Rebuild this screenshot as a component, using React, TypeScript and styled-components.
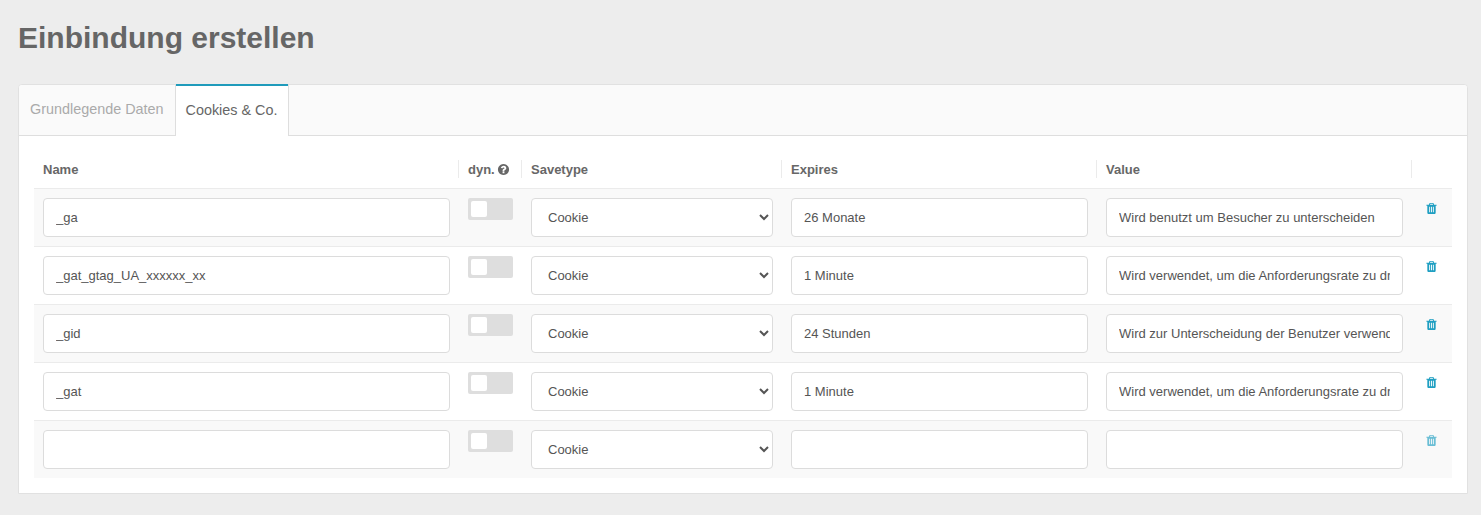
import React from 'react';
import styled, { createGlobalStyle } from 'styled-components';

const GlobalStyle = createGlobalStyle`
  *, *::before, *::after { box-sizing: border-box; }
  body {
    margin: 0;
    background: #ededed;
    color: #676767;
    font-family: "Liberation Sans", Arial, sans-serif;
    font-size: 13px;
  }
`;

const Page = styled.main`
  min-height: 515px;
  padding: 18px 13px 21px 18px;
`;

const Title = styled.h1`
  margin: 0 0 26px;
  font-size: 30px;
  line-height: 40px;
  font-weight: 700;
  color: #666;
`;

const Panel = styled.section`
  border: 1px solid #e1e1e1;
  border-radius: 4px 4px 0 0;
  background: #fff;
`;

const TabBar = styled.nav`
  display: flex;
  height: 51px;
  background: #fafafa;
  border-bottom: 1px solid #dedede;
  border-radius: 3px 3px 0 0;
`;

const Tab = styled.a<{ $active?: boolean }>`
  height: ${(p) => (p.$active ? 52 : 50)}px;
  margin-top: ${(p) => (p.$active ? -1 : 0)}px;
  padding: ${(p) => (p.$active ? '2px 9px 0 9.5px' : '0 12px 0 11px')};
  width: ${(p) => (p.$active ? 114 : 156)}px;
  font-size: 14.4px;
  line-height: ${(p) => (p.$active ? 49 : 48)}px;
  white-space: nowrap;
  color: ${(p) => (p.$active ? '#666' : '#aaa')};
  background: ${(p) => (p.$active ? '#fff' : 'transparent')};
  border: solid #dedede;
  border-width: ${(p) => (p.$active ? '0 1px' : '0')};
  box-shadow: ${(p) => (p.$active ? 'inset 0 2px #1f9bbb' : 'none')};
`;

const Grid = styled.div`
  padding: 14px 15px 15px;
`;

const Row = styled.div`
  display: grid;
  grid-template-columns: 425px 63px 260px 315px 315px 40px;
  height: 58px;
  border-top: 1px solid #ebebeb;

  &:nth-child(even) { background: #f9f9f9; }
`;

const HeaderRow = styled(Row)`
  height: 38px;
  border-top: 0;
  align-items: center;
`;

const HeaderCell = styled.div`
  display: flex;
  align-items: center;
  gap: 2px;
  height: 18px;
  padding: 0 8px 0 9px;
  font-weight: 700;
  color: #676767;
  border-right: 1px solid #ebebeb;

  &:last-child { border-right: 0; }
`;

const Cell = styled.div`
  padding: 9px;
`;

const Field = styled.input`
  display: block;
  width: 100%;
  height: 39px;
  padding: 0 12px;
  border: 1px solid #dcdcdc;
  border-radius: 4px;
  background: #fff;
  color: #555;
  font: inherit;
  outline: 0;
`;

const Picker = styled.select`
  display: block;
  width: 100%;
  height: 39px;
  padding: 0 0 0 12px;
  border: 1px solid #dcdcdc;
  border-radius: 4px;
  background: #fff;
  color: #555;
  font: inherit;
`;

const Toggle = styled.button`
  display: block;
  width: 45px;
  height: 22px;
  padding: 3px;
  border: 0;
  border-radius: 2px;
  background: #dedede;
`;

const Knob = styled.span`
  display: block;
  width: 16px;
  height: 16px;
  border-radius: 2px;
  background: #fff;
`;

const Remove = styled.button<{ $faded: boolean }>`
  display: flex;
  justify-content: center;
  width: 21px;
  margin-top: 4px;
  padding: 0;
  border: 0;
  background: none;
  color: #1f9fc2;
  opacity: ${(p) => (p.$faded ? 0.65 : 1)};
`;

const HelpIcon = () => (
  <svg width="13" height="13" viewBox="0 0 1792 1792" fill="currentColor" aria-hidden="true">
    <path d="M1024 1376v-192q0-14-9-23t-23-9h-192q-14 0-23 9t-9 23v192q0 14 9 23t23 9h192q14 0 23-9t9-23zm256-672q0-88-55.500-163t-138.500-116-170-41q-243 0-371 213-15 24 8 42l132 100q7 6 19 6 16 0 25-12 53-68 86-92 34-24 86-24 48 0 85.500 26t37.500 59q0 38-20 61t-68 45q-63 28-115.500 86.500t-52.500 125.500v36q0 14 9 23t23 9h192q14 0 23-9t9-23q0-19 21.500-49.500t54.500-49.500q32-18 49-28.500t46-35 44.500-48 28-60.500 12.500-81zm384 192q0 209-103 385.500t-279.500 279.500-385.500 103-385.500-103-279.500-279.500-103-385.500 103-385.500 279.500-279.500 385.500-103 385.500 103 279.500 279.500 103 385.500z" />
  </svg>
);

const TrashIcon = () => (
  <svg width="13" height="13" viewBox="0 0 1792 1792" fill="currentColor" aria-hidden="true">
    <path d="M704 1376v-704q0-14-9-23t-23-9h-64q-14 0-23 9t-9 23v704q0 14 9 23t23 9h64q14 0 23-9t9-23zm256 0v-704q0-14-9-23t-23-9h-64q-14 0-23 9t-9 23v704q0 14 9 23t23 9h64q14 0 23-9t9-23zm256 0v-704q0-14-9-23t-23-9h-64q-14 0-23 9t-9 23v704q0 14 9 23t23 9h64q14 0 23-9t9-23zm-544-992h448l-48-117q-7-9-17-11h-317q-10 2-17 11zm928 32v64q0 14-9 23t-23 9h-96v948q0 83-47 143.500t-113 60.500h-832q-66 0-113-58.500t-47-141.500v-952h-96q-14 0-23-9t-9-23v-64q0-14 9-23t23-9h309l70-167q15-37 54-63t79-26h320q40 0 79 26t54 63l70 167h309q14 0 23 9t9 23z" />
  </svg>
);

const cookies = [
  { name: '_ga', expires: '26 Monate', value: 'Wird benutzt um Besucher zu unterscheiden' },
  { name: '_gat_gtag_UA_xxxxxx_xx', expires: '1 Minute', value: 'Wird verwendet, um die Anforderungsrate zu drosseln' },
  { name: '_gid', expires: '24 Stunden', value: 'Wird zur Unterscheidung der Benutzer verwendet' },
  { name: '_gat', expires: '1 Minute', value: 'Wird verwendet, um die Anforderungsrate zu drosseln' },
  { name: '', expires: '', value: '' },
];

export default function App() {
  return (
    <Page>
      <GlobalStyle />
      <Title>Einbindung erstellen</Title>
      <Panel>
        <TabBar>
          <Tab>Grundlegende Daten</Tab>
          <Tab $active>Cookies &amp; Co.</Tab>
        </TabBar>
        <Grid>
          <HeaderRow>
            <HeaderCell>Name</HeaderCell>
            <HeaderCell>dyn. <HelpIcon /></HeaderCell>
            <HeaderCell>Savetype</HeaderCell>
            <HeaderCell>Expires</HeaderCell>
            <HeaderCell>Value</HeaderCell>
            <HeaderCell />
          </HeaderRow>
          {cookies.map((c, i) => (
            <Row key={i}>
              <Cell><Field defaultValue={c.name} /></Cell>
              <Cell><Toggle><Knob /></Toggle></Cell>
              <Cell><Picker><option>Cookie</option></Picker></Cell>
              <Cell><Field defaultValue={c.expires} /></Cell>
              <Cell><Field defaultValue={c.value} /></Cell>
              <Cell><Remove $faded={!c.name}><TrashIcon /></Remove></Cell>
            </Row>
          ))}
        </Grid>
      </Panel>
    </Page>
  );
}
